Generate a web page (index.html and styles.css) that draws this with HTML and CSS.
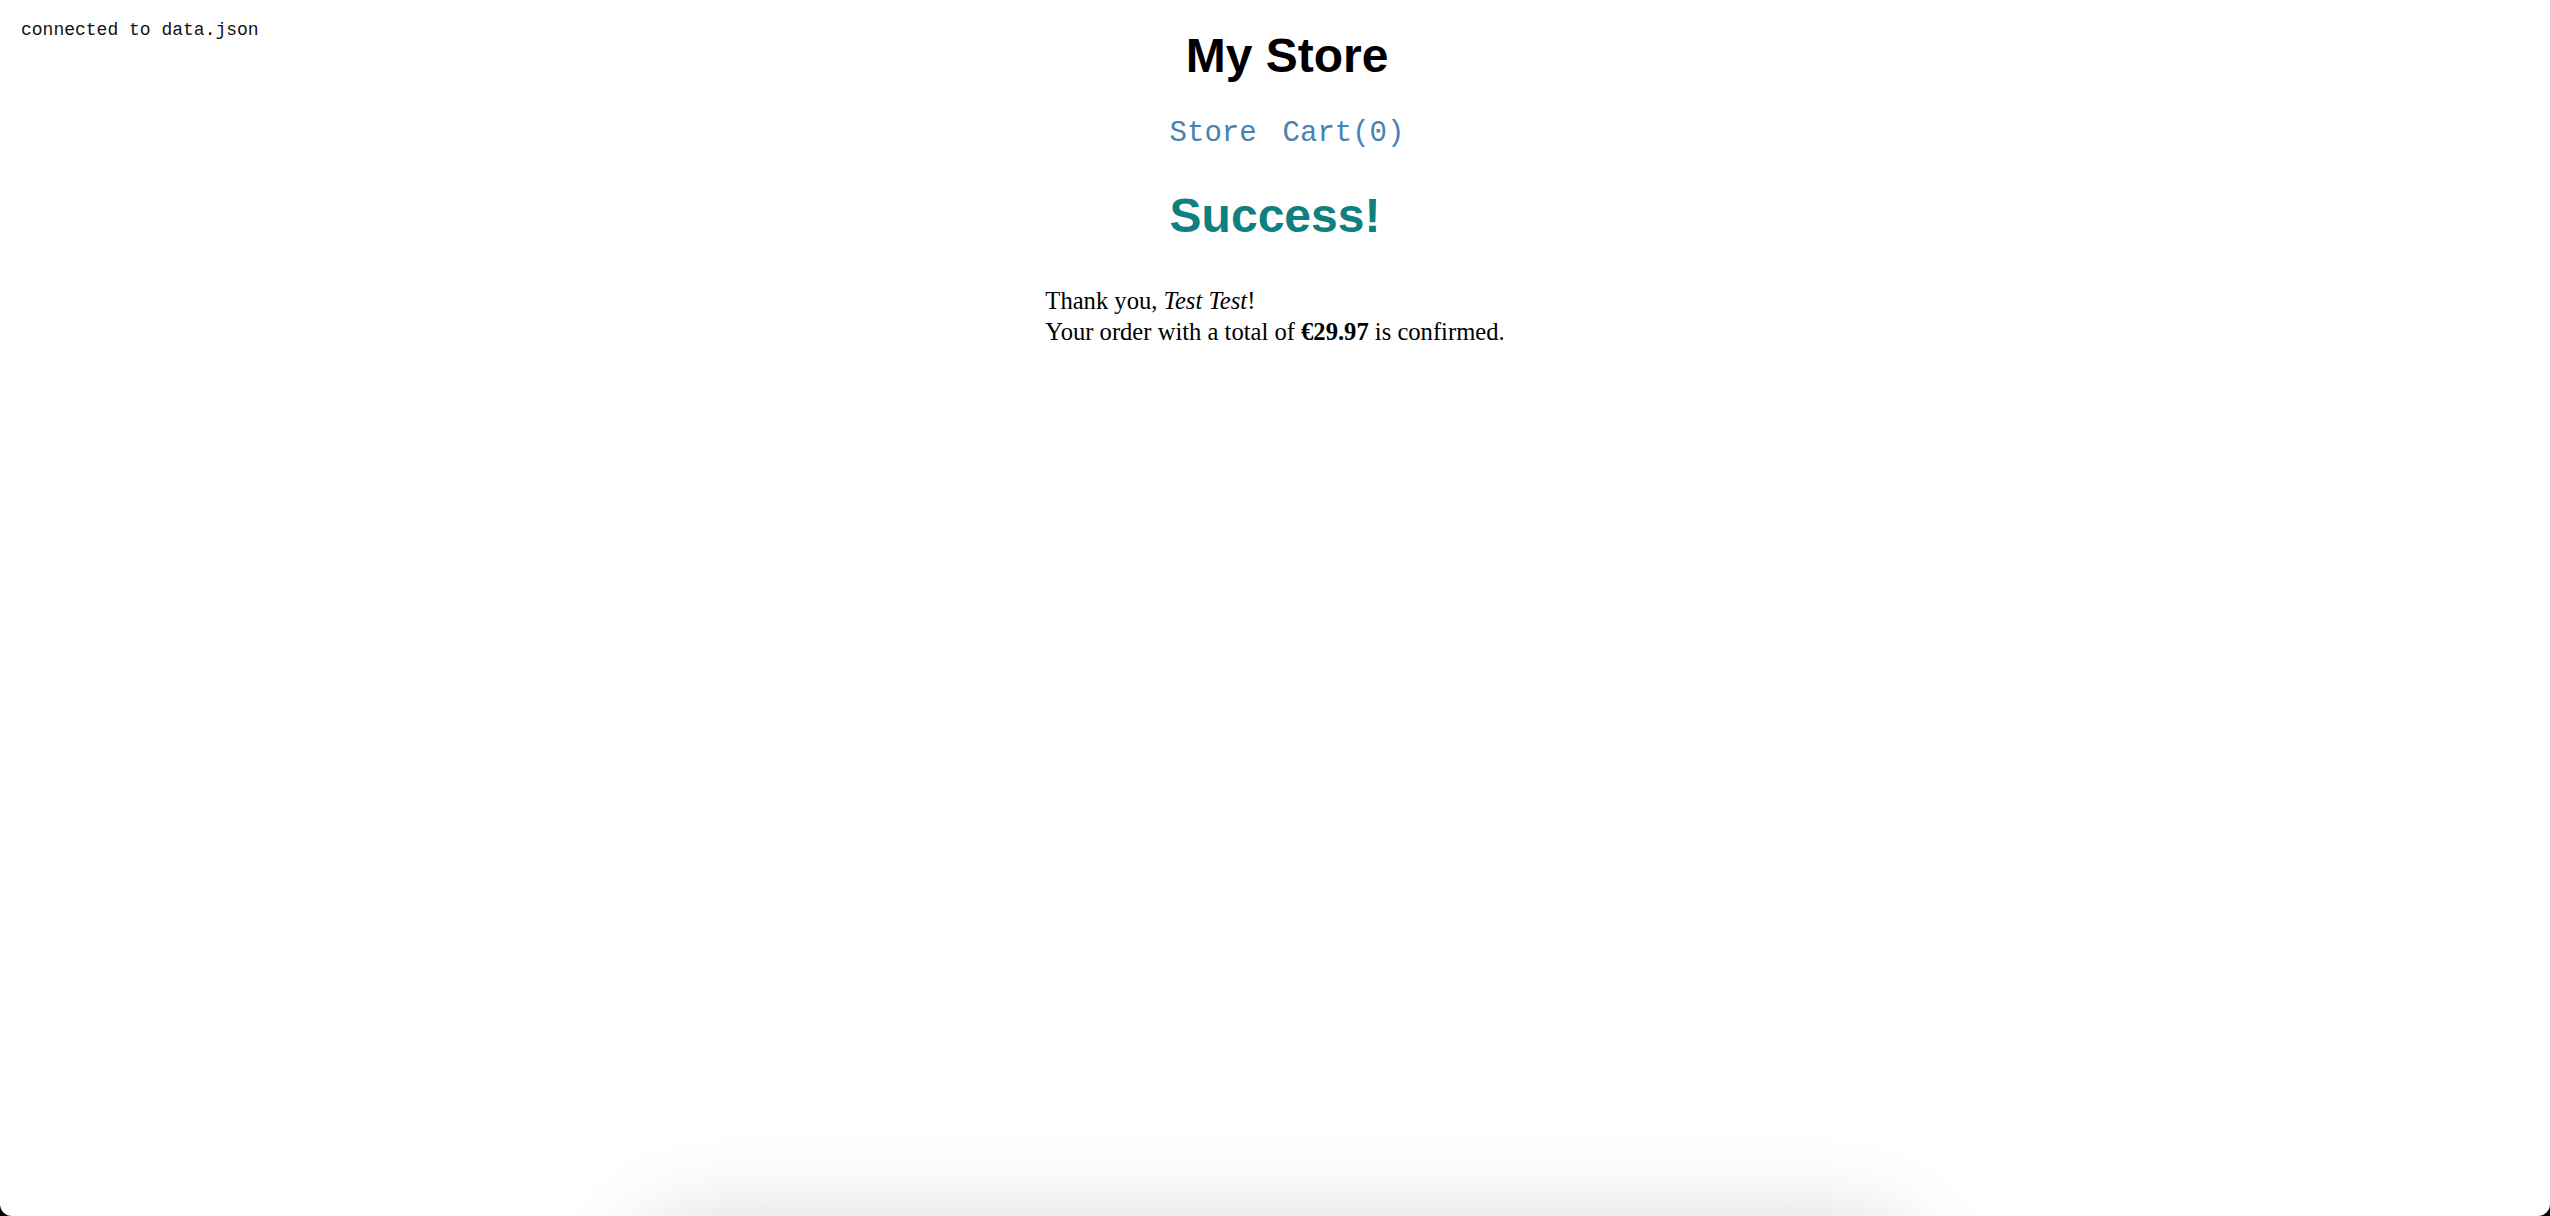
FILE: index.html
```html
<!DOCTYPE html>
<html lang="en">
<head>
<meta charset="utf-8">
<title>My Store</title>
<link rel="stylesheet" href="styles.css">
</head>
<body>
<div class="window">
  <div class="status">connected to data.json</div>
  <header class="top">
    <h1 class="title">My Store</h1>
    <nav class="nav">
      <a class="nav-link" href="#">Store</a>
      <a class="nav-link" href="#">Cart(0)</a>
    </nav>
  </header>
  <main class="content">
    <h2 class="success">Success!</h2>
    <div class="message">
      <div>Thank you, <em>Test Test</em>!</div>
      <div>Your order with a total of <strong>€29.97</strong> is confirmed.</div>
    </div>
  </main>
  <div class="dock-shadow"></div>
</div>
</body>
</html>
```

FILE: styles.css
```css
html {
  background: #000;
}
body {
  margin: 0;
  height: 1216px;
  overflow: hidden;
}
.window {
  position: relative;
  height: 1216px;
  background: #fff;
  border-radius: 0 0 12px 12px;
  overflow: hidden;
  display: flex;
  flex-direction: column;
  align-items: center;
}
.status {
  position: absolute;
  top: 20px;
  left: 21px;
  font-family: "Liberation Mono", "Courier New", monospace;
  font-size: 18px;
  line-height: 20px;
  color: #111;
}
.top {
  display: flex;
  flex-direction: column;
  align-items: center;
  padding-left: 24px;
}
.title {
  margin: 28px 0 0;
  font-family: "Liberation Sans", Arial, sans-serif;
  font-weight: bold;
  font-size: 48px;
  line-height: 56px;
  color: #000;
}
.nav {
  margin-top: 33px;
  display: flex;
  gap: 26px;
  font-family: "Liberation Mono", "Courier New", monospace;
  font-size: 29px;
  line-height: 34px;
}
.nav-link {
  color: #4682b4;
  text-decoration: none;
}
.content {
  display: flex;
  flex-direction: column;
  align-items: center;
}
.success {
  margin: 37px 0 0;
  font-family: "Liberation Sans", Arial, sans-serif;
  font-weight: bold;
  font-size: 48px;
  line-height: 56px;
  color: #0f7f7f;
}
.message {
  margin-top: 41px;
  font-family: "Liberation Serif", "Times New Roman", serif;
  font-size: 24.6px;
  line-height: 31px;
  color: #000;
}
.message em {
  font-style: italic;
}
.message strong {
  font-weight: bold;
}
.dock-shadow {
  position: absolute;
  left: 660px;
  top: 1250px;
  width: 1230px;
  height: 80px;
  border-radius: 40px;
  background: #ddd;
  box-shadow: 0 0 90px 30px rgba(0, 0, 0, 0.16);
}
```
